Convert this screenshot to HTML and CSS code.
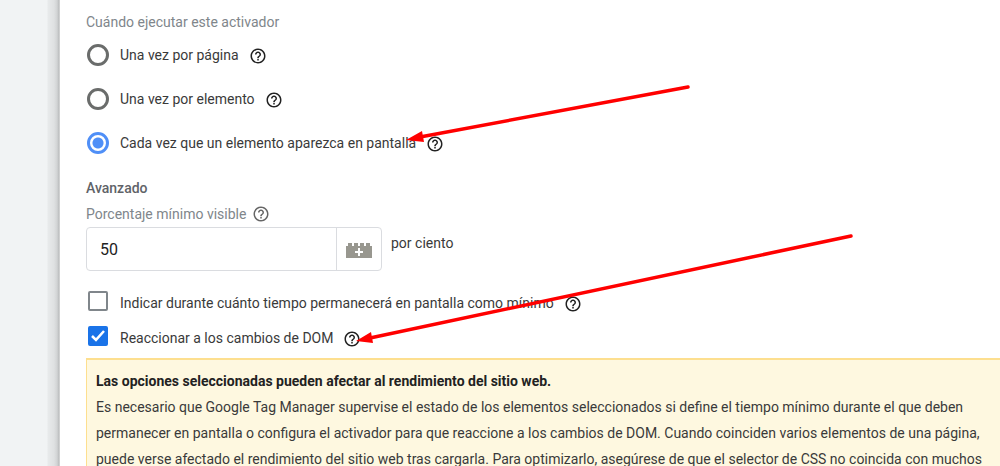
FILE: index.html
```
<!DOCTYPE html>
<html lang="es">
<head>
  <meta charset="UTF-8" />
  <meta name="viewport" content="width=device-width, initial-scale=1.0" />
  <title>Configuración del activador</title>
  <link rel="stylesheet" href="styles.css">
</head>
<body>
  <svg class="defs" width="0" height="0" aria-hidden="true">
    <symbol id="help" viewBox="0 0 24 24">
      <path d="M11 18h2v-2h-2v2zm1-16C6.480 2 2 6.480 2 12s4.480 10 10 10 10-4.480 10-10S17.520 2 12 2zm0 18c-4.410 0-8-3.590-8-8s3.590-8 8-8 8 3.590 8 8-3.590 8-8 8zm0-14c-2.210 0-4 1.790-4 4h2c0-1.100.9-2 2-2s2 .9 2 2c0 2-3 1.750-3 5h2c0-2.250 3-2.500 3-5 0-2.210-1.790-4-4-4z"/>
    </symbol>
  </svg>

  <div class="backdrop"></div>

  <main class="panel">
    <fieldset class="group">
      <legend class="caption">Cuándo ejecutar este activador</legend>
      <div class="option">
        <input type="radio" name="fire" id="oncePage" />
        <label for="oncePage">Una vez por página</label>
        <button type="button" class="help" aria-label="Ayuda"><svg><use href="#help"/></svg></button>
      </div>
      <div class="option">
        <input type="radio" name="fire" id="onceElement" />
        <label for="onceElement">Una vez por elemento</label>
        <button type="button" class="help" aria-label="Ayuda"><svg><use href="#help"/></svg></button>
      </div>
      <div class="option">
        <input type="radio" name="fire" id="everyTime" checked />
        <label for="everyTime">Cada vez que un elemento aparezca en pantalla</label>
        <button type="button" class="help" aria-label="Ayuda"><svg><use href="#help"/></svg></button>
      </div>
    </fieldset>

    <h2>Avanzado</h2>
    <div class="field-label">
      <label class="caption" for="percent">Porcentaje mínimo visible</label>
      <button type="button" class="help muted" aria-label="Ayuda"><svg><use href="#help"/></svg></button>
    </div>
    <div class="field">
      <div class="input-group">
        <input type="text" id="percent" value="50" />
        <button type="button" class="variable" aria-label="Insertar variable">
          <svg width="26" height="16" viewBox="0 0 26 16">
            <path fill="#98978f" d="M0 4h2V1h4v3h2V1h4v3h2V1h4v3h2V1h4v3h2v12H0z"/>
            <path stroke="#fff" stroke-width="2" d="M13 6v8M9 10h8"/>
          </svg>
        </button>
      </div>
      <span class="unit">por ciento</span>
    </div>

    <div class="check">
      <input type="checkbox" id="minTime" />
      <label for="minTime">Indicar durante cuánto tiempo permanecerá en pantalla como mínimo</label>
      <button type="button" class="help" aria-label="Ayuda"><svg><use href="#help"/></svg></button>
    </div>
    <div class="check">
      <input type="checkbox" id="domChanges" checked />
      <label for="domChanges">Reaccionar a los cambios de DOM</label>
      <button type="button" class="help" aria-label="Ayuda"><svg><use href="#help"/></svg></button>
    </div>

    <div class="notice">
      <strong>Las opciones seleccionadas pueden afectar al rendimiento del sitio web.</strong>
      <p>Es necesario que Google Tag Manager supervise el estado de los elementos seleccionados si define el tiempo mínimo durante el que deben permanecer en pantalla o configura el activador para que reaccione a los cambios de DOM. Cuando coinciden varios elementos de una página, puede verse afectado el rendimiento del sitio web tras cargarla. Para optimizarlo, asegúrese de que el selector de CSS no coincida con muchos</p>
    </div>
  </main>

  <!-- arrows drawn over the form -->
  <svg class="arrows" width="1000" height="466" viewBox="0 0 1000 466" aria-hidden="true">
    <g stroke="#f00" stroke-width="3.500" stroke-linecap="round">
      <path d="M420 137L688 87"/>
      <path d="M370 338L851 236"/>
    </g>
    <path fill="#f00" d="M406 140L422 131L424 142zM356 341L371 332L373 343z"/>
  </svg>
</body>
</html>
```

FILE: styles.css
```
* {
  box-sizing: border-box;
}
body {
  margin: 0;
  height: 100vh;
  display: flex;
  overflow: hidden;
  font-family: Roboto, "Liberation Sans", sans-serif;
  font-size: 14px;
  line-height: 20px;
  color: #3a3a3a;
  background: #fff;
}
.defs {
  position: absolute;
}
.backdrop {
  flex: 0 0 60px;
  background: linear-gradient(to right, #f1f3f4 47px, #e8eaeb 48px, #dfe1e2 54px, #d2d4d5 57px, #bbbdbe 59px, #e5e5e5 60px);
}
.panel {
  flex: 1;
  min-width: 0;
  padding: 12px 0 0 26px;
}
.group {
  margin: 0;
  padding: 0;
  border: 0;
}
.caption {
  padding: 0;
  color: #80868b;
}
.option {
  display: flex;
  align-items: center;
  height: 44px;
}
.group .option:nth-of-type(1) {
  margin-top: 1px;
}
.option input {
  appearance: none;
  width: 22px;
  height: 22px;
  margin: 0 11px 0 1px;
  border: 3px solid #6a6c6b;
  border-radius: 50%;
}
.option input:checked {
  border-color: #4f8ff7;
  background: radial-gradient(circle, #4f8ff7 5px, #fff 6px);
}
.help {
  margin: 2px 0 0 10px;
  padding: 0;
  width: 18px;
  height: 18px;
  border: 0;
  background: none;
  color: #222;
  cursor: pointer;
}
.help svg {
  display: block;
  width: 18px;
  height: 18px;
  fill: currentColor;
}
.help.muted {
  margin: 0 0 0 6px;
  color: #666;
}
h2 {
  margin: 13px 0 6px;
  font-size: 14px;
  font-weight: 500;
  line-height: 20px;
  color: #5f6368;
}
.field-label {
  display: flex;
  align-items: center;
  height: 20px;
}
.field {
  display: flex;
  align-items: flex-start;
  margin: 3px 0 14px;
}
.input-group {
  display: flex;
  width: 296px;
  height: 44px;
  border: 1px solid #dadce0;
  border-radius: 4px;
}
.input-group input {
  flex: 1;
  min-width: 0;
  padding: 2px 13px 0;
  border: 0;
  background: none;
  font: inherit;
  font-size: 16px;
  color: #222;
}
.variable {
  width: 45px;
  padding: 2px 0 0;
  border: 0;
  border-left: 1px solid #dadce0;
  background: none;
}
.variable svg {
  display: block;
  margin: 0 auto;
}
.unit {
  margin: 6px 0 0 9px;
}
.check {
  display: flex;
  align-items: center;
  height: 35px;
}
.check input {
  appearance: none;
  width: 20px;
  height: 20px;
  margin: 0 12px 4px 2px;
  border: 2px solid #80868b;
  border-radius: 2px;
}
.check input:checked {
  border-color: #1a73e8;
  background: #1a73e8 url("data:image/svg+xml,%3Csvg xmlns='http://www.w3.org/2000/svg' viewBox='0 0 16 16'%3E%3Cpath d='M2 8l4 4 8-9' fill='none' stroke='white' stroke-width='2.500'/%3E%3C/svg%3E") center / 16px no-repeat;
}
.notice {
  margin-top: 3px;
  padding: 8px 5px 8px 9px;
  border: solid #fddf8f;
  border-width: 2px 0 2px 1px;
  background: #fef8e0;
  line-height: 26px;
}
.notice strong {
  display: block;
  color: #222;
}
.notice p {
  margin: 0;
}
.arrows {
  position: absolute;
  top: 0;
  left: 0;
  pointer-events: none;
}
```
